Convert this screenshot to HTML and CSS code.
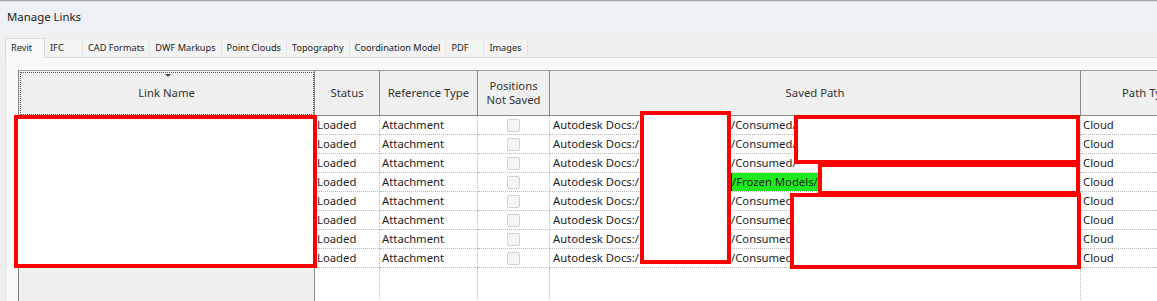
FILE: index.html
```html
<!DOCTYPE html>
<html lang="en">
<head>
    <meta charset="UTF-8">
    <meta name="viewport" content="width=device-width, initial-scale=1.0">
    <title>Manage Links</title>
    <link rel="stylesheet" href="styles.css">
</head>
<body>
    <div class="edge"></div>
    <div class="titlebar">Manage Links</div>

    <div class="tabs">
        <div class="tab active">Revit</div>
        <div class="tab">IFC</div>
        <div class="tab">CAD Formats</div>
        <div class="tab">DWF Markups</div>
        <div class="tab">Point Clouds</div>
        <div class="tab">Topography</div>
        <div class="tab">Coordination Model</div>
        <div class="tab">PDF</div>
        <div class="tab">Images</div>
    </div>

    <div class="panel">
        <div class="grid">
            <div class="row head">
                <div class="cell name-head"><span class="sort"></span>Link Name</div>
                <div class="cell">Status</div>
                <div class="cell">Reference Type</div>
                <div class="cell">Positions<br>Not Saved</div>
                <div class="cell">Saved Path</div>
                <div class="cell path-type">Path Type</div>
            </div>

            <div class="row">
                <div class="cell name"></div>
                <div class="cell">Loaded</div>
                <div class="cell">Attachment</div>
                <div class="cell check"><span class="box"></span></div>
                <div class="cell"><span class="proj">Autodesk Docs:/</span>/Consumed/</div>
                <div class="cell">Cloud</div>
            </div>
            <div class="row">
                <div class="cell name"></div>
                <div class="cell">Loaded</div>
                <div class="cell">Attachment</div>
                <div class="cell check"><span class="box"></span></div>
                <div class="cell"><span class="proj">Autodesk Docs:/</span>/Consumed/</div>
                <div class="cell">Cloud</div>
            </div>
            <div class="row">
                <div class="cell name"></div>
                <div class="cell">Loaded</div>
                <div class="cell">Attachment</div>
                <div class="cell check"><span class="box"></span></div>
                <div class="cell"><span class="proj">Autodesk Docs:/</span>/Consumed/</div>
                <div class="cell">Cloud</div>
            </div>
            <div class="row">
                <div class="cell name"></div>
                <div class="cell">Loaded</div>
                <div class="cell">Attachment</div>
                <div class="cell check"><span class="box"></span></div>
                <div class="cell"><span class="proj">Autodesk Docs:/</span><span class="frozen">/Frozen Models/</span>I</div>
                <div class="cell">Cloud</div>
            </div>
            <div class="row">
                <div class="cell name"></div>
                <div class="cell">Loaded</div>
                <div class="cell">Attachment</div>
                <div class="cell check"><span class="box"></span></div>
                <div class="cell"><span class="proj">Autodesk Docs:/</span>/Consumed/</div>
                <div class="cell">Cloud</div>
            </div>
            <div class="row">
                <div class="cell name"></div>
                <div class="cell">Loaded</div>
                <div class="cell">Attachment</div>
                <div class="cell check"><span class="box"></span></div>
                <div class="cell"><span class="proj">Autodesk Docs:/</span>/Consumed/</div>
                <div class="cell">Cloud</div>
            </div>
            <div class="row">
                <div class="cell name"></div>
                <div class="cell">Loaded</div>
                <div class="cell">Attachment</div>
                <div class="cell check"><span class="box"></span></div>
                <div class="cell"><span class="proj">Autodesk Docs:/</span>/Consumed/</div>
                <div class="cell">Cloud</div>
            </div>
            <div class="row">
                <div class="cell name"></div>
                <div class="cell">Loaded</div>
                <div class="cell">Attachment</div>
                <div class="cell check"><span class="box"></span></div>
                <div class="cell"><span class="proj">Autodesk Docs:/</span>/Consumed/</div>
                <div class="cell">Cloud</div>
            </div>

            <div class="row filler">
                <div class="cell name"></div>
                <div class="cell"></div>
                <div class="cell"></div>
                <div class="cell"></div>
                <div class="cell"></div>
                <div class="cell"></div>
            </div>

            <!-- redaction boxes drawn over the grid -->
            <div class="mask m1"></div>
            <div class="mask m2"></div>
            <div class="mask m3"></div>
            <div class="mask m4"></div>
            <div class="mask m5"></div>
        </div>
    </div>
</body>
</html>
```

FILE: styles.css
```css
body {
    margin: 0;
    padding: 0;
    width: 1157px;
    height: 301px;
    overflow: hidden;
    background-color: #f0f0f0;
    font-family: "Noto Sans", "Open Sans", sans-serif;
    color: #1e1e1e;
}

.edge {
    height: 1px;
    border-top: 1px solid #a9a9a9;
    background-color: #dedede;
}

.titlebar {
    height: 30px;
    line-height: 30px;
    padding-left: 7px;
    background-color: #eef2f7;
    font-size: 11.4px;
    color: #1a1a1a;
}

.tabs {
    display: flex;
    height: 25px;
    padding-left: 5px;
    box-sizing: border-box;
    padding-top: 7px;
    position: relative;
    z-index: 1;
}

.tab {
    height: 18px;
    line-height: 18px;
    min-width: 27px;
    padding: 0 5px;
    font-size: 9.2px;
    color: #222;
    background-color: #f3f3f3;
    border-right: 1px solid #e4e4e4;
    box-sizing: content-box;
}

.tab.active {
    min-width: 28px;
    height: 19px;
    margin-top: -1px;
    background-color: #f9f9f9;
    border: 1px solid #dadada;
    border-bottom: none;
}

.panel {
    margin-left: 5px;
    height: 244px;
    padding: 12px 0 0 12px;
    background-color: #f9f9f9;
    border-top: 1px solid #dadada;
    border-left: 1px solid #e2e2e2;
}

.grid {
    position: relative;
    width: 1202px;
    background-color: #fff;
    border-top: 1px solid #a0a0a0;
    border-left: 1px solid #808080;
    font-size: 11.3px;
}

.row {
    display: grid;
    grid-template-columns: 296px 65px 98px 72px 531px 140px;
    height: 19px;
}

.cell {
    box-sizing: border-box;
    border-right: 1px dotted #b8b8b8;
    border-bottom: 1px dotted #b8b8b8;
    padding-left: 2px;
    line-height: 18px;
    white-space: nowrap;
    overflow: hidden;
}

.row.head {
    height: 45px;
    background-color: #f0f0f0;
    color: #333;
}

.row.head .cell {
    position: relative;
    display: flex;
    align-items: center;
    justify-content: center;
    text-align: center;
    line-height: 14px;
    padding: 0;
    border-right: 1px solid #8a8a8a;
    border-bottom: 1px solid #8a8a8a;
}

.row.head .path-type {
    justify-content: flex-start;
    padding-left: 41px;
}

.name-head {
    outline: 1px dotted #555;
    outline-offset: -2px;
}

.sort {
    position: absolute;
    top: 3px;
    left: 146px;
    width: 0;
    height: 0;
    border-left: 3px solid transparent;
    border-right: 3px solid transparent;
    border-top: 3px solid #444;
}

.cell.name {
    background-color: #f0f0f0;
    border-right: 1px solid #8a8a8a;
    border-bottom: none;
}

.cell.check {
    display: flex;
    align-items: center;
    justify-content: center;
    padding-left: 0;
}

.box {
    width: 11px;
    height: 11px;
    border: 1px solid #d3d3d3;
    border-radius: 2px;
    background-color: #f5f5f5;
}

.proj {
    display: inline-block;
    width: 178px;
    padding-left: 1px;
}

.frozen {
    display: inline-block;
    background-color: #1ee81e;
    border-left: 1px solid #111;
    line-height: 18px;
}

.row.filler {
    height: 40px;
}

.row.filler .cell {
    border-bottom: none;
}

.mask {
    position: absolute;
    box-sizing: border-box;
    border: 4px solid #ff0000;
    background-color: #fff;
}

.m1 { left: -5px; top: 44px; width: 303px; height: 153px; }
.m2 { left: 621px; top: 40px; width: 91px; height: 153px; }
.m3 { left: 775px; top: 44px; width: 286px; height: 49px; }
.m4 { left: 799px; top: 92px; width: 262px; height: 32px; }
.m5 { left: 771px; top: 122px; width: 291px; height: 76px; }
```
